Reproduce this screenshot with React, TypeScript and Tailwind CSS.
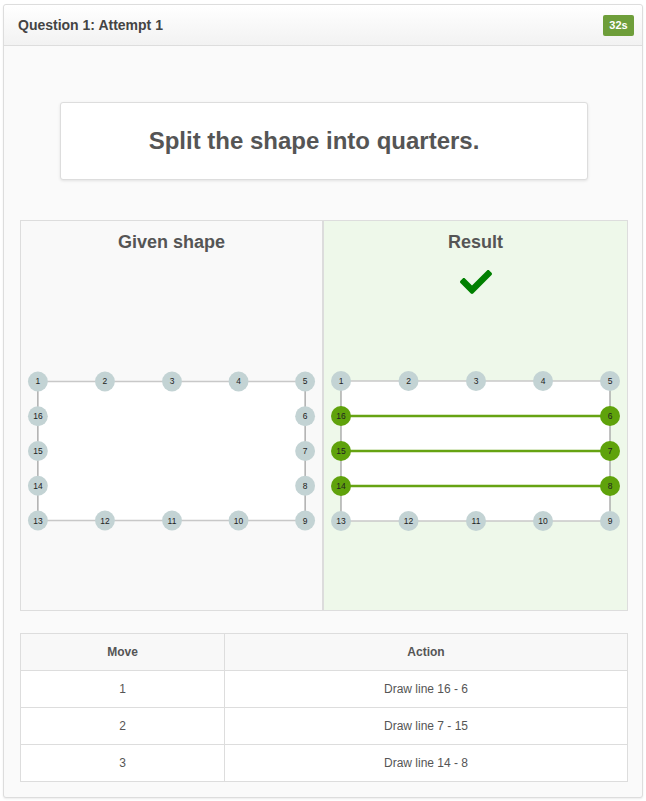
import React from "react";

const xs = [17, 84.5, 152, 219, 286];
const ys = [15, 50, 85, 120, 155];

// perimeter points numbered clockwise from top-left
const points: { n: number; x: number; y: number }[] = [
  { n: 1, x: xs[0], y: ys[0] },
  { n: 2, x: xs[1], y: ys[0] },
  { n: 3, x: xs[2], y: ys[0] },
  { n: 4, x: xs[3], y: ys[0] },
  { n: 5, x: xs[4], y: ys[0] },
  { n: 6, x: xs[4], y: ys[1] },
  { n: 7, x: xs[4], y: ys[2] },
  { n: 8, x: xs[4], y: ys[3] },
  { n: 9, x: xs[4], y: ys[4] },
  { n: 10, x: xs[3], y: ys[4] },
  { n: 11, x: xs[2], y: ys[4] },
  { n: 12, x: xs[1], y: ys[4] },
  { n: 13, x: xs[0], y: ys[4] },
  { n: 14, x: xs[0], y: ys[3] },
  { n: 15, x: xs[0], y: ys[2] },
  { n: 16, x: xs[0], y: ys[1] },
];

const moves = [
  { move: 1, action: "Draw line 16 - 6", from: 16, to: 6 },
  { move: 2, action: "Draw line 7 - 15", from: 7, to: 15 },
  { move: 3, action: "Draw line 14 - 8", from: 14, to: 8 },
];

function Shape({ drawn }: { drawn: boolean }) {
  const active = new Set<number>();
  if (drawn) moves.forEach((m) => { active.add(m.from); active.add(m.to); });
  const pt = (n: number) => points.find((p) => p.n === n)!;
  return (
    <svg width="100%" height="170" viewBox="0 0 303 170" className="block">
      <rect x={xs[0]} y={ys[0]} width={xs[4] - xs[0]} height={ys[4] - ys[0]} fill="#ffffff" />
      <line x1={xs[0]} y1={ys[0]} x2={xs[4]} y2={ys[0]} stroke="#c8c8c8" strokeWidth="1.5" />
      <line x1={xs[0]} y1={ys[4]} x2={xs[4]} y2={ys[4]} stroke="#c8c8c8" strokeWidth="1.5" />
      <line x1={xs[0]} y1={ys[0]} x2={xs[0]} y2={ys[4]} stroke="#9a9a9a" strokeWidth="1.2" />
      <line x1={xs[4]} y1={ys[0]} x2={xs[4]} y2={ys[4]} stroke="#9a9a9a" strokeWidth="1.2" />
      {drawn &&
        moves.map((m) => (
          <line
            key={m.move}
            x1={pt(m.from).x}
            y1={pt(m.from).y}
            x2={pt(m.to).x}
            y2={pt(m.to).y}
            stroke="#66a312"
            strokeWidth="2.5"
          />
        ))}
      {points.map((p) => (
        <g key={p.n}>
          <circle cx={p.x} cy={p.y} r="10" fill={active.has(p.n) ? "#5fa20b" : "#c3d3d4"} />
          <text
            x={p.x}
            y={p.y + 3}
            textAnchor="middle"
            fontSize="8.5"
            fill="#222"
            style={{ fontFamily: '"Liberation Sans", Arial, sans-serif' }}
          >
            {p.n}
          </text>
        </g>
      ))}
    </svg>
  );
}

function CheckIcon() {
  return (
    <svg width="32" height="32" viewBox="0 0 512 512" className="block">
      <path
        fill="#008000"
        d="M173.898 439.404l-166.4-166.4c-9.997-9.997-9.997-26.206 0-36.204l36.203-36.204c9.997-9.998 26.207-9.998 36.204 0L192 312.69 432.095 72.596c9.997-9.997 26.207-9.997 36.204 0l36.203 36.204c9.997 9.997 9.997 26.206 0 36.204l-294.4 294.401c-9.998 9.997-26.207 9.997-36.204-.001z"
      />
    </svg>
  );
}

export default function App() {
  return (
    <div className="min-h-[801px] bg-white px-[3px] pt-[4px] font-['Liberation_Sans',Arial,sans-serif]">
      <div className="border border-[#dddddd] rounded-[3px] bg-[#fafafa] shadow-[0_1px_2px_rgba(0,0,0,0.08)]">
        {/* Header */}
        <div className="h-[41px] flex items-center justify-between pl-[14px] pr-[8px] border-b border-[#dddddd] bg-gradient-to-b from-white to-[#f2f2f2] rounded-t-[3px]">
          <h1 className="text-[14px] font-bold text-[#444]">Question 1: Attempt 1</h1>
          <span className="h-[21px] w-[31px] flex items-center justify-center rounded-[2px] bg-[#6e9e3a] text-white text-[11px] font-bold">
            32s
          </span>
        </div>

        <div className="pl-[16px] pr-[14px] pt-[56px] pb-[15px]">
          {/* Question */}
          <div className="mx-auto w-[528px] h-[78px] flex items-center justify-center pr-[20px] bg-white border border-[#dddddd] rounded-[3px] shadow-[0_1px_3px_rgba(0,0,0,0.1)]">
            <p className="text-[24px] font-bold text-[#555]">Split the shape into quarters.</p>
          </div>

          {/* Shapes */}
          <div className="mt-[40px] grid grid-cols-2 border border-[#dddddd] h-[391px]">
            <div className="bg-[#f9f9f9] border-r-2 border-[#dcdcdc] flex flex-col">
              <h2 className="pt-[9px] h-[33px] text-center text-[18px] leading-[24px] font-bold text-[#555]">Given shape</h2>
              <div className="h-[112px]" />
              <Shape drawn={false} />
            </div>
            <div className="bg-[#eef8ea] flex flex-col">
              <h2 className="pt-[9px] h-[33px] text-center text-[18px] leading-[24px] font-bold text-[#555]">Result</h2>
              <div className="h-[112px] flex justify-center pt-[12px]">
                <CheckIcon />
              </div>
              <Shape drawn={true} />
            </div>
          </div>

          {/* Moves table */}
          <table className="mt-[22px] w-full border-collapse border border-[#dddddd] bg-white text-[12px] text-[#555]">
            <thead>
              <tr className="bg-[#f8f8f8] h-[37px]">
                <th className="w-[204px] border border-[#dddddd] font-bold text-center">Move</th>
                <th className="border border-[#dddddd] font-bold text-center">Action</th>
              </tr>
            </thead>
            <tbody>
              {moves.map((m) => (
                <tr key={m.move} className="h-[37px]">
                  <td className="border border-[#dddddd] text-center">{m.move}</td>
                  <td className="border border-[#dddddd] text-center">{m.action}</td>
                </tr>
              ))}
            </tbody>
          </table>
        </div>
      </div>
    </div>
  );
}
